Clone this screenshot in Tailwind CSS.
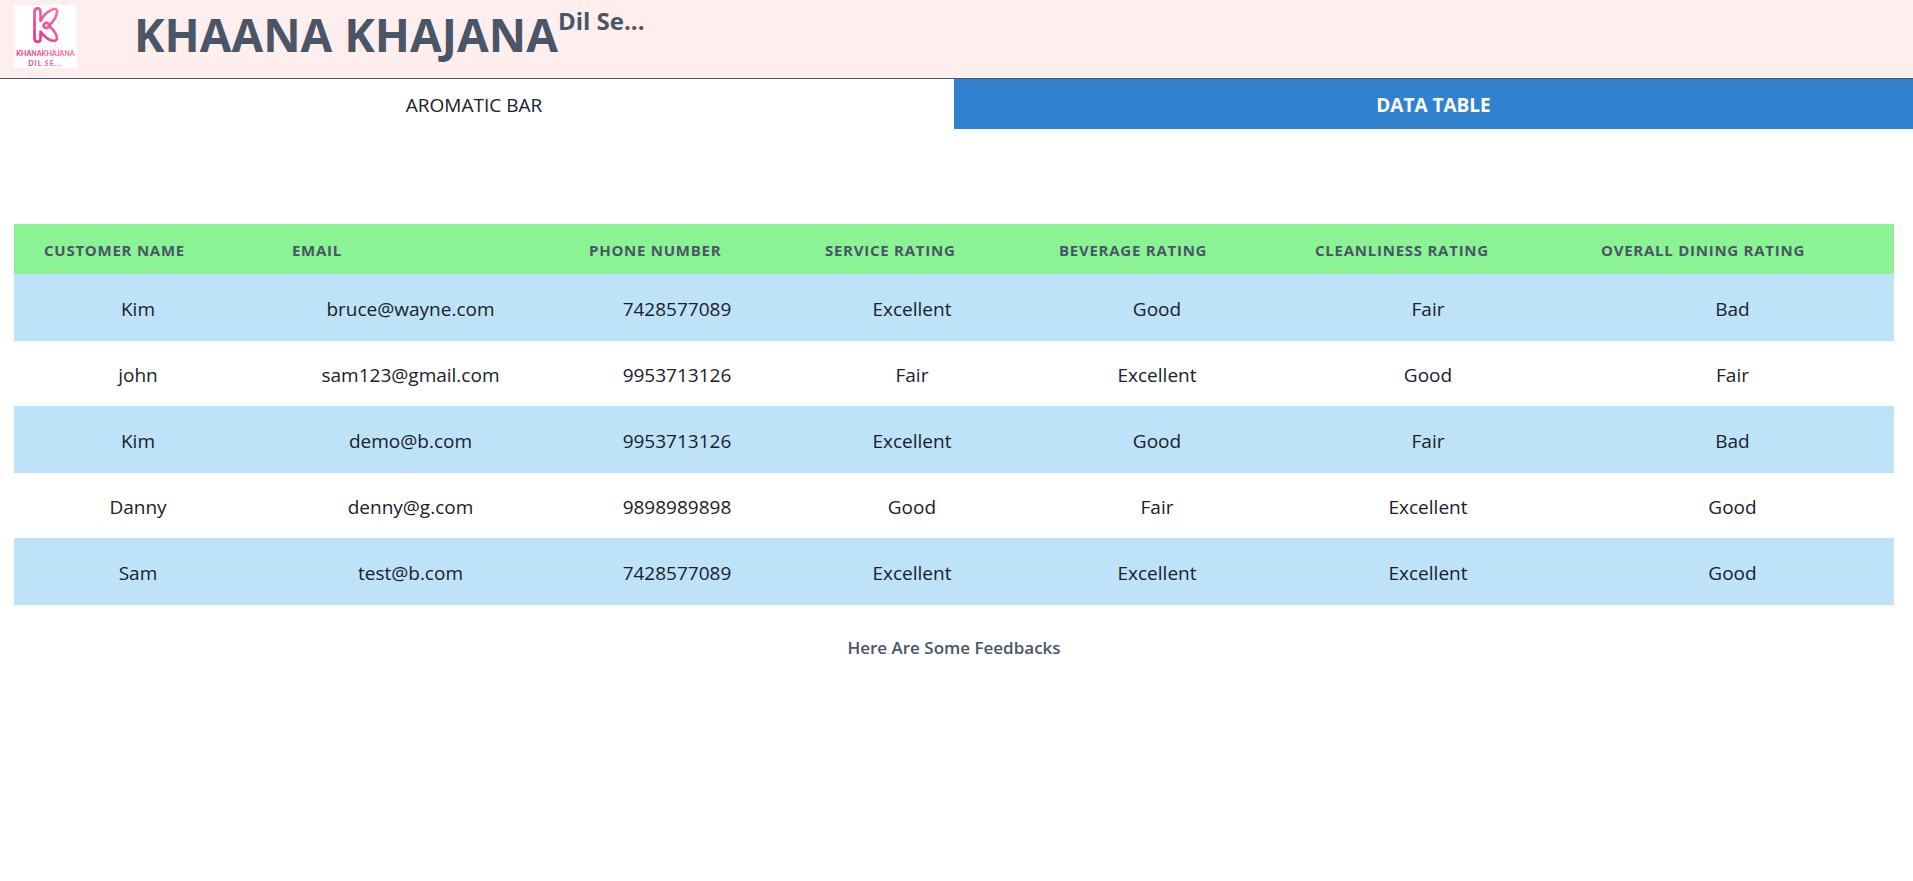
<!DOCTYPE html>
<html lang="en">
<head>
<meta charset="utf-8">
<meta name="viewport" content="width=device-width, initial-scale=1">
<title>Khaana Khajana</title>
<script src="https://cdn.jsdelivr.net/npm/@tailwindcss/browser@4"></script>
</head>
<body class="bg-white font-['Segoe_UI','Open_Sans',sans-serif] text-[19px] text-[#1a202c]">
<header class="flex items-start border-b border-[#4a5568] bg-[#ffeeee] px-3.5 pt-[5px] pb-2.5">
  <svg class="size-[63px] shrink-0" viewBox="0 0 63 63" role="img" aria-label="Khanakhajana Dil Se">
    <defs>
      <linearGradient id="pink" gradientUnits="userSpaceOnUse" x1="19" x2="45" y1="30" y2="10">
        <stop offset="0" stop-color="#ee2f86"/><stop offset="1" stop-color="#ff6fae"/>
      </linearGradient>
      <linearGradient id="pinkText" gradientUnits="userSpaceOnUse" x1="0" x2="63" y1="0" y2="0">
        <stop offset="0" stop-color="#e8257d"/><stop offset="1" stop-color="#ff6fae"/>
      </linearGradient>
    </defs>
    <rect width="63" height="63" fill="#fff"/>
    <g fill="none" stroke="url(#pink)" stroke-width="2.600" stroke-linecap="round" stroke-linejoin="round">
      <path d="M26.500 16V7Q26.500 3.400 23.500 3.400Q20.500 3.400 20.500 7V33Q20.500 36.800 23.500 36.800Q26.500 36.800 26.500 33.500V26.500Q33 35.500 40.500 36Q44.500 35 42 29.500Q39.500 24 34.500 20.500Q42 15 43.200 6.500Q43 3.500 39 4.200Q31 7 26.500 16"/>
      <ellipse cx="32.500" cy="20.500" rx="3" ry="2.600"/>
    </g>
    <g fill="url(#pinkText)" font-family="Lato, sans-serif" font-weight="700" text-anchor="middle">
      <text x="31.500" y="51" font-size="7">KHANAKHAJANA</text>
      <text x="31.500" y="60.500" font-size="7" letter-spacing="1">DIL SE...</text>
    </g>
  </svg>
  <h1 class="ml-[57px] flex items-start font-bold text-[#4a5568]">
    <span class="text-[46px] leading-[58px]">KHAANA KHAJANA</span>
    <span class="text-2xl">Dil Se...</span>
  </h1>
</header>
<nav class="grid grid-cols-[954fr_959fr]">
  <button type="button" class="h-[50px] pt-0.5 pr-1.5">AROMATIC BAR</button>
  <button type="button" class="h-[50px] bg-[#3182ce] pt-0.5 font-bold text-white">DATA TABLE</button>
</nav>
<main class="mt-[95px] mr-[19px] ml-3.5">
  <table class="w-full table-fixed border-collapse text-center">
    <caption class="caption-bottom pt-[30px] text-[17px] font-semibold text-[#4a5568]">Here Are Some Feedbacks</caption>
    <colgroup>
      <col class="w-[13.19%]"><col class="w-[15.8%]"><col class="w-[12.55%]"><col class="w-[12.45%]"><col class="w-[13.62%]"><col class="w-[15.21%]"><col>
    </colgroup>
    <thead class="bg-[#8bf394] text-left text-[15px] tracking-wider text-[#4a5568]">
      <tr class="h-[50px] *:pt-0.5 *:pl-[30px]">
        <th scope="col">CUSTOMER NAME</th><th scope="col">EMAIL</th><th scope="col">PHONE NUMBER</th><th scope="col">SERVICE RATING</th><th scope="col">BEVERAGE RATING</th><th scope="col">CLEANLINESS RATING</th><th scope="col">OVERALL DINING RATING</th>
      </tr>
    </thead>
    <tbody>
      <tr class="h-[66px] border-y border-[#bee3f8] odd:bg-[#bee3f8] *:pt-1"><td>Kim</td><td>bruce@wayne.com</td><td>7428577089</td><td>Excellent</td><td>Good</td><td>Fair</td><td>Bad</td></tr>
      <tr class="h-[66px] border-y border-[#bee3f8] odd:bg-[#bee3f8] *:pt-1"><td>john</td><td>sam123@gmail.com</td><td>9953713126</td><td>Fair</td><td>Excellent</td><td>Good</td><td>Fair</td></tr>
      <tr class="h-[66px] border-y border-[#bee3f8] odd:bg-[#bee3f8] *:pt-1"><td>Kim</td><td>demo@b.com</td><td>9953713126</td><td>Excellent</td><td>Good</td><td>Fair</td><td>Bad</td></tr>
      <tr class="h-[66px] border-y border-[#bee3f8] odd:bg-[#bee3f8] *:pt-1"><td>Danny</td><td>denny@g.com</td><td>9898989898</td><td>Good</td><td>Fair</td><td>Excellent</td><td>Good</td></tr>
      <tr class="h-[66px] border-y border-[#bee3f8] odd:bg-[#bee3f8] *:pt-1"><td>Sam</td><td>test@b.com</td><td>7428577089</td><td>Excellent</td><td>Excellent</td><td>Excellent</td><td>Good</td></tr>
    </tbody>
  </table>
</main>
</body>
</html>
